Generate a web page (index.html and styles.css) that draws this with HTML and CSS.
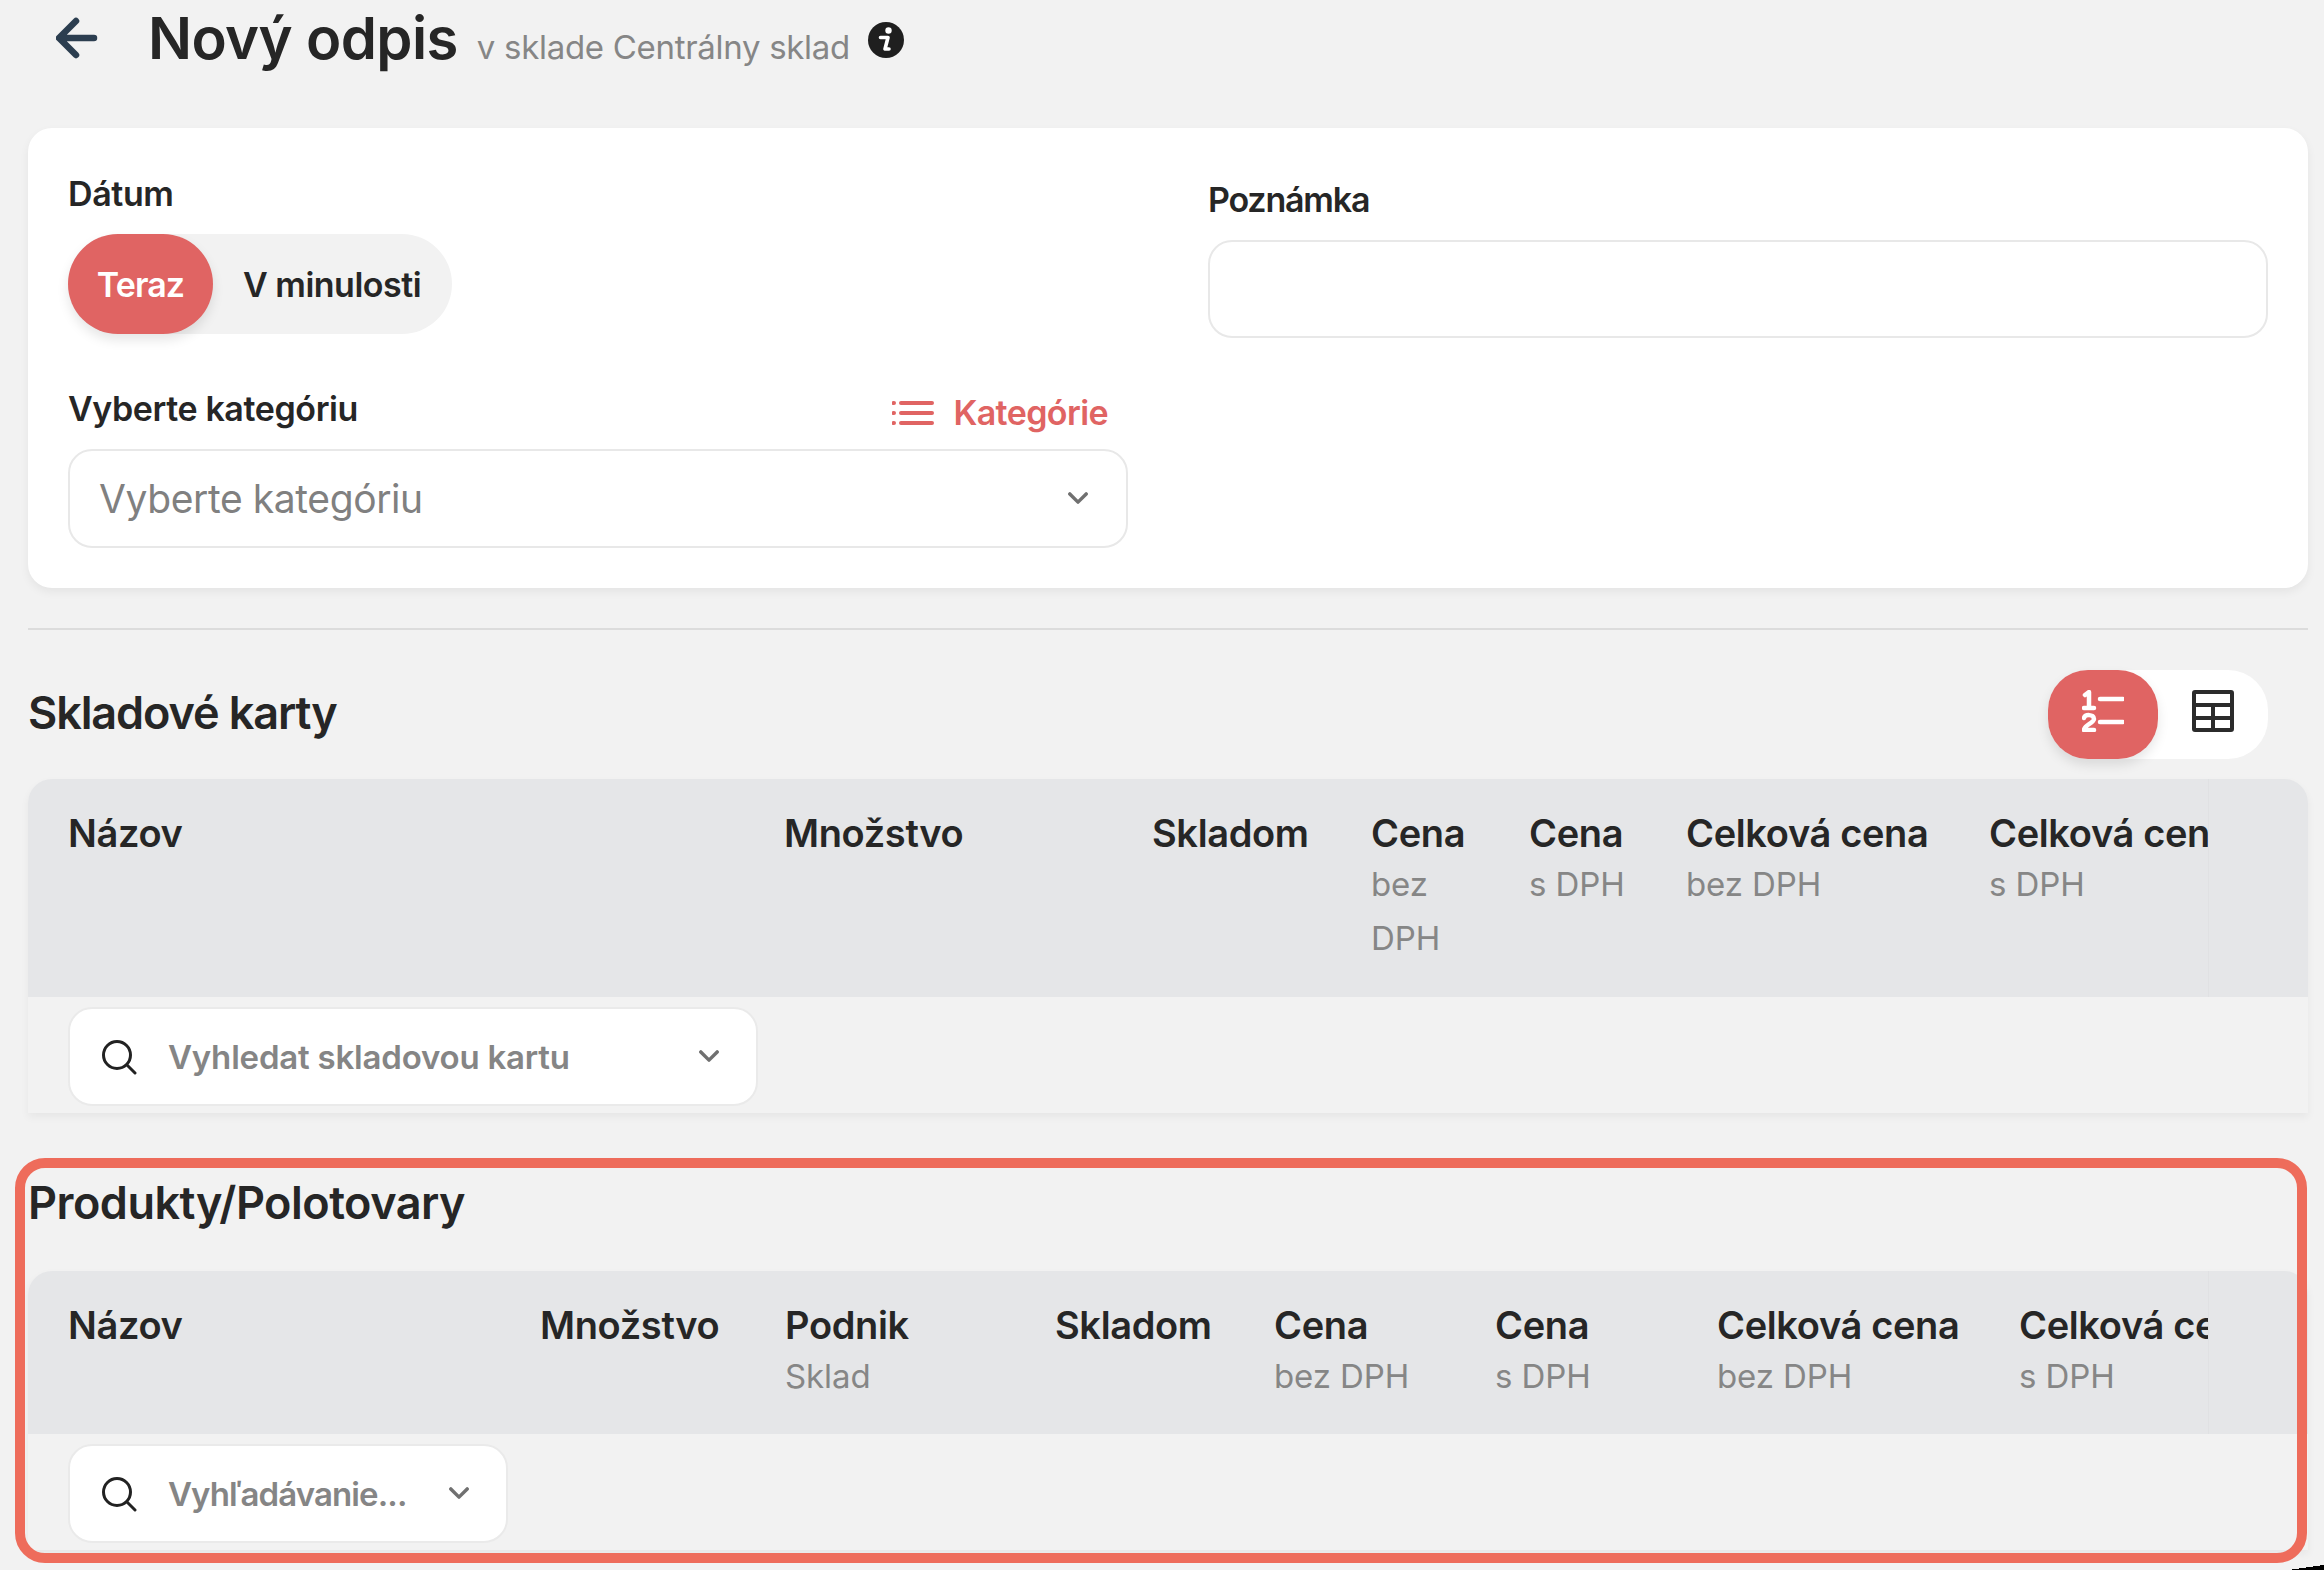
FILE: index.html
```html
<!DOCTYPE html>
<html lang="sk">
<head>
    <meta charset="UTF-8">
    <meta name="viewport" content="width=device-width, initial-scale=1.0">
    <title>Nový odpis</title>
    <link rel="stylesheet" href="styles.css">
</head>
<body>
    <header class="page-head">
        <svg class="back-icon" viewBox="0 0 42 42"><path d="M38 21H4M20 4 3 21l17 17"/></svg>
        <h1>Nový odpis</h1>
        <span class="page-sub">v sklade Centrálny sklad</span>
        <svg class="info-icon" viewBox="0 0 36 36"><circle cx="18" cy="18" r="18"/><circle cx="20.500" cy="8.500" r="3.200" fill="#fff"/><path d="M12.500 15.500h7.500l-3 11.500h4" fill="none" stroke="#fff" stroke-width="3.600" stroke-linejoin="round" stroke-linecap="round"/></svg>
    </header>

    <section class="card">
        <div class="card-col">
            <div class="label">Dátum</div>
            <div class="switch">
                <span class="switch-on">Teraz</span>
                <span class="switch-off">V minulosti</span>
            </div>
            <div class="label-row">
                <div class="label">Vyberte kategóriu</div>
                <div class="cat-link">
                    <svg class="cat-icon" viewBox="0 0 42 26"><path d="M9 3h31M9 13h31M9 23h31"/><path d="M1.500 3h.5M1.500 13h.5M1.500 23h.5"/></svg>
                    Kategórie
                </div>
            </div>
            <div class="select">
                <span>Vyberte kategóriu</span>
                <svg class="chevron" viewBox="0 0 22 14"><path d="M2 2l9 9 9-9"/></svg>
            </div>
        </div>
        <div class="card-col note-col">
            <div class="label">Poznámka</div>
            <div class="note-input"></div>
        </div>
    </section>

    <hr class="divider">

    <div class="section-head">
        <h2>Skladové karty</h2>
        <div class="view-switch">
            <span class="view-on">
                <svg class="view-icon" viewBox="0 0 42 42"><g fill="none" stroke="#fff" stroke-width="4.500" stroke-linecap="round" stroke-linejoin="round"><path d="M18 9h23M18 32h23"/><path d="M3 5l4-3v16M2 18h10"/><path d="M2 28c1-4 10-4 10 1 0 4-10 6-10 11h10"/></g></svg>
            </span>
            <span class="view-off">
                <svg class="view-icon" viewBox="0 0 42 42"><g fill="none" stroke="#2b2b2b" stroke-width="4"><rect x="2" y="2" width="38" height="38" rx="1"/><path d="M2 15h38M2 28h38M21 15v25"/></g></svg>
            </span>
        </div>
    </div>

    <div class="table">
        <div class="table-head">
            <div class="head-cols cols-cards">
                <div class="col">Názov</div>
                <div class="col">Množstvo</div>
                <div class="col">Skladom</div>
                <div class="col">Cena<small>bez DPH</small></div>
                <div class="col">Cena<small>s DPH</small></div>
                <div class="col">Celková cena<small>bez DPH</small></div>
                <div class="col">Celková cena<small>s DPH</small></div>
            </div>
            <div class="head-end"></div>
        </div>
        <div class="table-body">
            <div class="search search-wide">
                <svg class="search-icon" viewBox="0 0 36 36"><circle cx="16" cy="16" r="13.500"/><path d="M26 26l8 8"/></svg>
                <span>Vyhledat skladovou kartu</span>
                <svg class="chevron" viewBox="0 0 22 14"><path d="M2 2l9 9 9-9"/></svg>
            </div>
        </div>
    </div>

    <div class="marked">
        <h2 class="marked-title">Produkty/Polotovary</h2>
        <div class="table">
            <div class="table-head">
                <div class="head-cols cols-products">
                    <div class="col">Názov</div>
                    <div class="col">Množstvo</div>
                    <div class="col">Podnik<small>Sklad</small></div>
                    <div class="col">Skladom</div>
                    <div class="col">Cena<small>bez DPH</small></div>
                    <div class="col">Cena<small>s DPH</small></div>
                    <div class="col">Celková cena<small>bez DPH</small></div>
                    <div class="col">Celková cena<small>s DPH</small></div>
                </div>
                <div class="head-end"></div>
            </div>
            <div class="table-body">
                <div class="search search-small">
                    <svg class="search-icon" viewBox="0 0 36 36"><circle cx="16" cy="16" r="13.500"/><path d="M26 26l8 8"/></svg>
                    <span>Vyhľadávanie...</span>
                    <svg class="chevron" viewBox="0 0 22 14"><path d="M2 2l9 9 9-9"/></svg>
                </div>
            </div>
        </div>
        <div class="red-outline"></div>
    </div>
    <div class="window-corner"></div>
</body>
</html>
```

FILE: styles.css
```css
* {
    box-sizing: border-box;
}
html, body {
    height: 1570px;
    overflow: hidden;
}
body {
    position: relative;
    margin: 0;
    padding: 0 16px 0 28px;
    background: #f2f2f2;
    color: #262626;
    font-family: Inter, "Noto Sans", sans-serif;
}
h1, h2 {
    margin: 0;
    font-weight: 600;
}

/* top line */
.page-head {
    height: 128px;
    display: flex;
    align-items: flex-start;
    padding: 0 0 0 28px;
}
.back-icon {
    width: 42px;
    height: 42px;
    margin-top: 17px;
    fill: none;
    stroke: #2c3e50;
    stroke-width: 6.500;
    stroke-linecap: round;
    stroke-linejoin: round;
}
h1 {
    margin-left: 50px;
    font-size: 58px;
    line-height: 76px;
    letter-spacing: -0.6px;
}
.page-sub {
    margin: 25px 0 0 19px;
    font-size: 33px;
    line-height: 44px;
    letter-spacing: -0.3px;
    color: #868686;
}
.info-icon {
    width: 36px;
    height: 36px;
    margin: 22px 0 0 18px;
    fill: #1f1f1f;
}

/* card */
.card {
    height: 460px;
    display: flex;
    padding: 46px 40px 0;
    background: #fff;
    border-radius: 24px;
    box-shadow: 0 4px 10px rgba(0, 0, 0, 0.06);
}
.card-col {
    width: 1060px;
}
.note-col {
    width: 1060px;
    margin-left: 80px;
    padding-top: 6px;
}
.note-col .label {
    letter-spacing: -1.2px;
}
.label {
    font-size: 34px;
    line-height: 40px;
    font-weight: 600;
    letter-spacing: -0.4px;
}
.switch {
    width: 384px;
    height: 100px;
    margin-top: 20px;
    display: flex;
    align-items: center;
    background: #f2f2f2;
    border-radius: 50px;
    font-size: 34px;
    font-weight: 600;
    letter-spacing: -0.5px;
}
.switch-on {
    width: 145px;
    height: 100px;
    display: flex;
    align-items: center;
    justify-content: center;
    color: #fff;
    background: #e06463;
    border-radius: 50px;
    box-shadow: 0 6px 12px rgba(0, 0, 0, 0.1);
    letter-spacing: -0.9px;
}
.switch-off {
    margin-left: 30px;
}
.label-row {
    margin-top: 55px;
    display: flex;
    justify-content: space-between;
    align-items: flex-start;
    padding-right: 20px;
}
.cat-link {
    display: flex;
    align-items: center;
    padding-top: 4px;
    font-size: 34px;
    line-height: 40px;
    font-weight: 600;
    letter-spacing: -0.6px;
    color: #e06463;
}
.cat-icon {
    width: 42px;
    height: 26px;
    margin-right: 19px;
    fill: none;
    stroke: #e06463;
    stroke-width: 4;
    stroke-linecap: round;
}
.select {
    height: 99px;
    margin-top: 16px;
    display: flex;
    align-items: center;
    justify-content: space-between;
    padding: 0 38px 0 29px;
    border: 2px solid #e8e8e8;
    border-radius: 24px;
    font-size: 39px;
    letter-spacing: -0.4px;
    color: #808080;
}
.chevron {
    width: 20px;
    height: 13px;
    flex: none;
    fill: none;
    stroke: #707070;
    stroke-width: 3.800;
    stroke-linecap: round;
    stroke-linejoin: round;
}
.note-input {
    height: 98px;
    margin-top: 20px;
    border: 2px solid #e8e8e8;
    border-radius: 24px;
}

.divider {
    margin: 40px 0 0;
    border: 0;
    border-top: 2px solid #dcdcdc;
}

/* section headings */
.section-head {
    height: 149px;
    display: flex;
    justify-content: space-between;
    align-items: flex-start;
    padding: 40px 40px 0 0;
}
.section-head h2 {
    margin-top: 11px;
    letter-spacing: -1.1px;
}
h2 {
    font-size: 45px;
    line-height: 64px;
}
.view-switch {
    width: 220px;
    height: 89px;
    display: flex;
    background: #fff;
    border-radius: 40px;
}
.view-on, .view-off {
    width: 110px;
    height: 89px;
    display: flex;
    align-items: center;
    justify-content: center;
    padding-bottom: 8px;
}
.view-on {
    background: #e06463;
    border-radius: 40px;
    box-shadow: 0 6px 12px rgba(0, 0, 0, 0.1);
}
.view-icon {
    width: 42px;
    height: 42px;
}

/* tables */
.table {
    border-radius: 24px 24px 0 0;
    box-shadow: 0 4px 8px rgba(0, 0, 0, 0.05);
}
.table-head {
    display: flex;
    background: #e5e6e8;
    border-radius: 24px 24px 0 0;
    overflow: hidden;
    font-size: 38px;
    font-weight: 600;
    letter-spacing: -0.35px;
}
.head-cols {
    width: 2180px;
    padding: 30px 0 0 40px;
    display: grid;
    overflow: hidden;
    white-space: nowrap;
}
.head-end {
    flex: 1;
    border-left: 1px solid #e0e1e3;
}
.cols-cards {
    height: 218px;
    grid-template-columns: 716px 368px 219px 158px 157px 303px 320px;
}
.cols-products {
    height: 163px;
    grid-template-columns: 472px 245px 270px 219px 221px 222px 302px 320px;
}
.col small {
    display: block;
    font-size: 33px;
    line-height: 54px;
    font-weight: 400;
    letter-spacing: -0.1px;
    color: #868686;
    white-space: normal;
}
.cols-cards .col:nth-child(4) small {
    width: 100px;
}
.col {
    line-height: 48px;
}
.table-body {
    height: 116px;
    padding: 10px 0 0 40px;
}
.search {
    height: 99px;
    display: flex;
    align-items: center;
    padding: 0 37px 0 31px;
    background: #fff;
    border: 2px solid #eaeaea;
    border-radius: 24px;
    font-size: 33px;
    font-weight: 600;
    letter-spacing: -0.2px;
    color: #858585;
}
.search-wide {
    width: 690px;
}
.search-small {
    width: 440px;
}
.search-small span {
    letter-spacing: -0.9px;
}
.search span {
    flex: 1;
    margin-left: 31px;
    white-space: nowrap;
}
.search-icon {
    width: 36px;
    height: 36px;
    flex: none;
    fill: none;
    stroke: #222;
    stroke-width: 3;
    stroke-linecap: round;
}

/* annotated block */
.marked {
    position: relative;
    padding-top: 58px;
}
.marked-title {
    margin-bottom: 36px;
    letter-spacing: -0.5px;
}
.red-outline {
    position: absolute;
    left: -13px;
    right: 1px;
    top: 45px;
    height: 405px;
    border: 10px solid #ee6c5b;
    border-radius: 30px;
    pointer-events: none;
}
.window-corner {
    position: absolute;
    right: 0;
    bottom: 0;
    width: 36px;
    height: 5px;
    background: linear-gradient(to bottom right, transparent 50%, #000 50%);
}
```
